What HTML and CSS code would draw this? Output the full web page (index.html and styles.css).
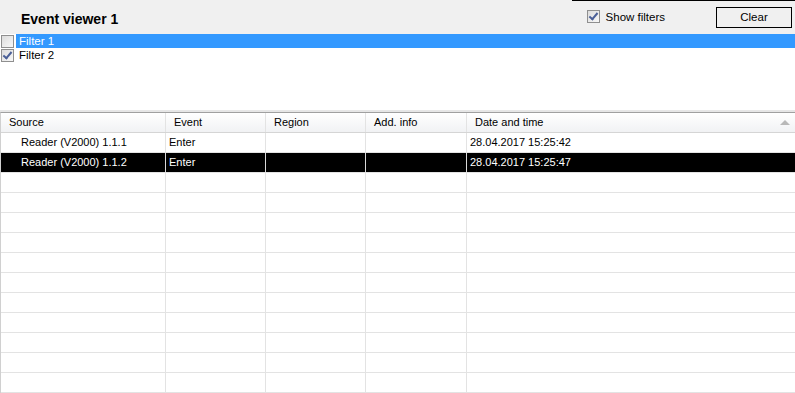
FILE: index.html
```html
<!DOCTYPE html>
<html lang="en">
<head>
<meta charset="UTF-8">
<title>Event viewer 1</title>
<link rel="stylesheet" href="styles.css">
</head>
<body>
<div class="window">
    <div class="topbar">
        <h1 class="title">Event viewer 1</h1>
        <label class="show-filters"><span class="check checked"></span>Show filters</label>
        <button class="btn">Clear</button>
    </div>
    <div class="filters">
        <div class="filter selected"><span class="check"></span><span class="filter-name">Filter 1</span></div>
        <div class="filter"><span class="check checked"></span><span class="filter-name">Filter 2</span></div>
    </div>
    <div class="grid">
        <div class="row head">
            <div class="cell c1">Source</div>
            <div class="cell c2">Event</div>
            <div class="cell c3">Region</div>
            <div class="cell c4">Add. info</div>
            <div class="cell c5">Date and time<span class="sort"></span></div>
        </div>
        <div class="row">
            <div class="cell c1 indent">Reader (V2000) 1.1.1</div>
            <div class="cell c2">Enter</div>
            <div class="cell c3"></div>
            <div class="cell c4"></div>
            <div class="cell c5">28.04.2017 15:25:42</div>
        </div>
        <div class="row active">
            <div class="cell c1 indent">Reader (V2000) 1.1.2</div>
            <div class="cell c2">Enter</div>
            <div class="cell c3"></div>
            <div class="cell c4"></div>
            <div class="cell c5">28.04.2017 15:25:47</div>
        </div>
        <div class="row"><div class="cell c1"></div><div class="cell c2"></div><div class="cell c3"></div><div class="cell c4"></div><div class="cell c5"></div></div>
        <div class="row"><div class="cell c1"></div><div class="cell c2"></div><div class="cell c3"></div><div class="cell c4"></div><div class="cell c5"></div></div>
        <div class="row"><div class="cell c1"></div><div class="cell c2"></div><div class="cell c3"></div><div class="cell c4"></div><div class="cell c5"></div></div>
        <div class="row"><div class="cell c1"></div><div class="cell c2"></div><div class="cell c3"></div><div class="cell c4"></div><div class="cell c5"></div></div>
        <div class="row"><div class="cell c1"></div><div class="cell c2"></div><div class="cell c3"></div><div class="cell c4"></div><div class="cell c5"></div></div>
        <div class="row"><div class="cell c1"></div><div class="cell c2"></div><div class="cell c3"></div><div class="cell c4"></div><div class="cell c5"></div></div>
        <div class="row"><div class="cell c1"></div><div class="cell c2"></div><div class="cell c3"></div><div class="cell c4"></div><div class="cell c5"></div></div>
        <div class="row"><div class="cell c1"></div><div class="cell c2"></div><div class="cell c3"></div><div class="cell c4"></div><div class="cell c5"></div></div>
        <div class="row"><div class="cell c1"></div><div class="cell c2"></div><div class="cell c3"></div><div class="cell c4"></div><div class="cell c5"></div></div>
        <div class="row"><div class="cell c1"></div><div class="cell c2"></div><div class="cell c3"></div><div class="cell c4"></div><div class="cell c5"></div></div>
        <div class="row"><div class="cell c1"></div><div class="cell c2"></div><div class="cell c3"></div><div class="cell c4"></div><div class="cell c5"></div></div>
    </div>
</div>
</body>
</html>
```

FILE: styles.css
```css
body {
    margin: 0;
    padding: 0;
    font-family: "Liberation Sans", Arial, sans-serif;
    font-size: 11px;
    color: #000;
    background: #fff;
    overflow: hidden;
}
.window {
    width: 795px;
    height: 393px;
}
.topbar {
    height: 34px;
    background: #f0f0f0;
    border-top: 1px solid #f0f0f0;
    box-sizing: border-box;
    display: flex;
    align-items: center;
    position: relative;
}
.topbar::before {
    /* edge of the window above */
    content: "";
    position: absolute;
    top: -1px;
    left: 572px;
    right: 0;
    height: 1px;
    background: #000;
}
.title {
    margin: 0 0 0 21px;
    font-size: 14px;
    font-weight: bold;
    flex: 1;
    padding-top: 2px;
}
.show-filters {
    display: flex;
    align-items: center;
    margin-right: 51px;
    font-size: 11.5px;
    margin-top: -2px;
}
.show-filters .check {
    margin-right: 6px;
}
.btn {
    width: 76px;
    height: 21px;
    margin-right: 3px;
    margin-top: -1px;
    border: 1px solid #000;
    background: #f0f0f0;
    font-family: inherit;
    font-size: 11.5px;
    padding: 0;
}
.check {
    display: inline-block;
    width: 11px;
    height: 11px;
    border: 1px solid #8f8f8f;
    background: linear-gradient(135deg, #dcdcdc, #f8f8f8);
    position: relative;
    flex: none;
}
.check.checked::after {
    content: "";
    position: absolute;
    left: 3px;
    top: 0px;
    width: 3px;
    height: 7px;
    border: solid #4a5f97;
    border-width: 0 2px 2px 0;
    transform: rotate(40deg);
}
.filters {
    height: 76px;
    background: #fff;
    border-bottom: 2px solid #e6e6e6;
}
.filter {
    display: flex;
    align-items: center;
    height: 14px;
    font-size: 11.5px;
}
.filter .check {
    margin-left: 1px;
    margin-right: 2px;
}
.filter-name {
    flex: 1;
    padding-left: 3px;
    height: 14px;
    line-height: 14px;
}
.filter.selected .filter-name {
    background: #3399ff;
    color: #fff;
}
.grid {
    border-top: 1px solid #a0a0a0;
    border-left: 1px solid #d0d0d0;
}
.row {
    display: flex;
    height: 20px;
    border-bottom: 1px solid #e3e3e3;
    box-sizing: border-box;
}
.row.head {
    background: linear-gradient(#ffffff, #f1f2f4);
    border-bottom: 1px solid #d5d5d5;
    height: 20px;
}
.row.head .cell {
    border-right-color: #e3e3e3;
    padding-left: 8px;
}
.cell {
    box-sizing: border-box;
    border-right: 1px solid #e3e3e3;
    line-height: 19px;
    padding-left: 3px;
    white-space: nowrap;
    position: relative;
}
.cell.indent {
    padding-left: 20px;
}
.c1 { width: 165px; }
.c2 { width: 100px; }
.c3 { width: 100px; }
.c4 { width: 101px; }
.c5 { flex: 1; border-right: none; }
.row.active {
    background: #000;
    color: #fff;
}
.row.active .cell {
    border-right-color: #d8d8d8;
}
.row.active .c5 {
    border-right: none;
}
.sort {
    position: absolute;
    right: 5px;
    top: 7px;
    width: 0;
    height: 0;
    border-left: 5px solid transparent;
    border-right: 5px solid transparent;
    border-bottom: 5px solid #b8b8b8;
}
```
